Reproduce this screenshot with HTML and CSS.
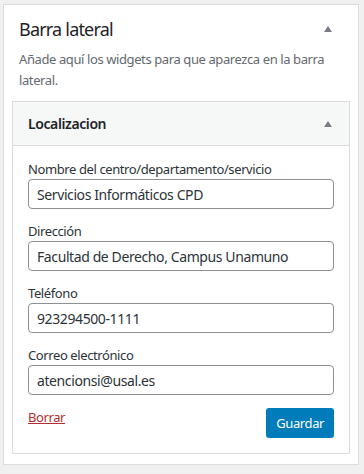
FILE: index.html
```html
<!DOCTYPE html>
<html lang="es">
<head>
  <meta charset="UTF-8" />
  <title>Barra lateral</title>
  <link rel="stylesheet" href="styles.css">
</head>
<body>

  <!-- Sidebar area -->
  <div class="sidebar">
    <div class="sidebar-head">
      <h2>Barra lateral</h2>
      <span class="toggle"></span>
    </div>
    <p class="sidebar-desc">Añade aquí los widgets para que aparezca en la barra lateral.</p>

    <!-- Widget -->
    <div class="widget">
      <div class="widget-top">
        <h3>Localizacion</h3>
        <span class="toggle"></span>
      </div>
      <form class="widget-inside">
        <div class="field">
          <label>Nombre del centro/departamento/servicio</label>
          <input type="text" value="Servicios Informáticos CPD">
        </div>
        <div class="field">
          <label>Dirección</label>
          <input type="text" value="Facultad de Derecho, Campus Unamuno">
        </div>
        <div class="field">
          <label>Teléfono</label>
          <input type="text" value="923294500-1111">
        </div>
        <div class="field">
          <label>Correo electrónico</label>
          <input type="text" value="atencionsi@usal.es">
        </div>
        <div class="actions">
          <a href="#" class="delete">Borrar</a>
          <button type="button">Guardar</button>
        </div>
      </form>
    </div>
  </div>

</body>
</html>
```

FILE: styles.css
```css
* { margin: 0; padding: 0; box-sizing: border-box; }
body {
  font-family: 'Noto Sans', sans-serif;
  font-size: 13px;
  letter-spacing: -0.4px;
  background: #f0f0f1;
  color: #1d2327;
}

.sidebar {
  margin: 4px 5px 0 3px;
  height: 461px;
  background: white;
  border: 1px solid #dcdcde;
  padding: 0 8px;
}

.sidebar-head {
  display: flex;
  justify-content: space-between;
  align-items: center;
  padding: 12px 18px 0 7px;
}

.sidebar-head h2 {
  font-size: 18px;
  font-weight: 400;
  line-height: 24px;
  letter-spacing: -0.8px;
}

.toggle {
  width: 0;
  height: 0;
  border-left: 4px solid transparent;
  border-right: 4px solid transparent;
  border-bottom: 6px solid #787c82;
}

.sidebar-desc {
  color: #646970;
  line-height: 21px;
  padding: 8px 7px 0 7px;
}

.widget {
  margin-top: 10px;
  border: 1px solid #dcdcde;
}

.widget-top {
  display: flex;
  justify-content: space-between;
  align-items: center;
  height: 44px;
  padding: 0 17px 0 15px;
  background: #f6f7f7;
  border-bottom: 1px solid #dcdcde;
}

.widget-top h3 {
  font-size: 14px;
  font-weight: 600;
}

.widget-inside {
  padding: 14px 15px 15px;
}

.field { margin-bottom: 13px; }

.field label {
  display: block;
  line-height: 18px;
  margin-bottom: 1px;
  color: #2c3338;
}

.field input {
  display: block;
  width: 100%;
  height: 30px;
  padding: 0 8px;
  border: 1px solid #8c8f94;
  border-radius: 4px;
  font-family: inherit;
  font-size: 14px;
  letter-spacing: inherit;
  color: #2c3338;
}

.actions {
  display: flex;
  justify-content: space-between;
  align-items: flex-start;
}

.delete {
  color: #b32d2e;
  line-height: 18px;
}

button {
  background: #007cba;
  color: white;
  border: none;
  border-radius: 3px;
  height: 30px;
  padding: 0 10px;
  font-family: inherit;
  font-size: 13px;
  letter-spacing: inherit;
}
```
